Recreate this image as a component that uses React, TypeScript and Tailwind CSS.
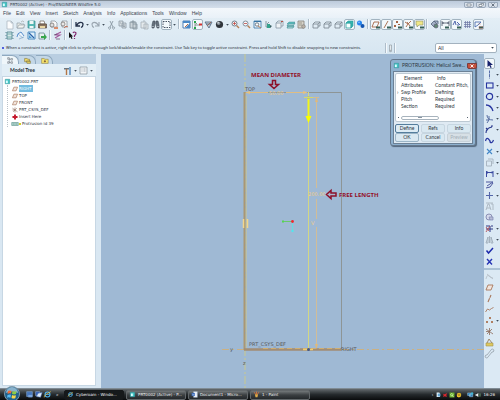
import React from 'react';
import clsx from 'clsx';

type ToolDef = {
  icon: string;
  label: string;
  pressed?: boolean;
  menu?: boolean;
};

const menus = ['File', 'Edit', 'View', 'Insert', 'Sketch', 'Analysis', 'Info', 'Applications', 'Tools', 'Window', 'Help'];

const glyphs: Record<string, React.ReactNode> = {
  page: <path d="M3 2h4l2 2v6H3zM7 2v2h2" fill="#fbfcfd" stroke="#a7b1bb" strokeWidth=".7" />,
  open: (
    <>
      <path d="M2 9V4h3l1 1h3v4z" fill="#e3e6e4" stroke="#97a2a9" strokeWidth=".7" />
      <path d="M2 9l2-3h6L8 9zM6 3q2-2 3 0" fill="#f4f5f2" stroke="#97a2a9" strokeWidth=".7" />
    </>
  ),
  save: (
    <>
      <path d="M2 2h7v7H2z" fill="#55b8b5" stroke="#398c91" strokeWidth=".7" />
      <path d="M3.500 2h4v3h-4zM3.500 7h4v2h-4z" fill="#eef6f6" />
    </>
  ),
  print: (
    <>
      <path d="M3 2h4l1 3H3z" fill="#fff" stroke="#6c6257" strokeWidth=".7" />
      <path d="M1.500 5h8v4h-8z" fill="#8b7561" stroke="#59493d" strokeWidth=".7" />
      <path d="M3 7h5v2H3z" fill="#ead7a3" />
    </>
  ),
  mail: (
    <>
      <path d="M3 2h4l2 2v4H3z" fill="#f7f7f7" stroke="#838b94" strokeWidth=".7" />
      <circle cx="4" cy="6" r="2" fill="#ddd" stroke="#706a67" strokeWidth=".7" />
      <path d="M6 8h4v2H6z" fill="#d98c6b" />
    </>
  ),
  link: (
    <>
      <path d="M3 2h5v6H3z" fill="#f7f7f7" stroke="#838b94" strokeWidth=".7" />
      <circle cx="4" cy="5" r="2" fill="#e8e8e8" stroke="#706a67" strokeWidth=".7" />
      <path d="M5 9q2-3 4-1" fill="none" stroke="#c46f55" />
    </>
  ),
  undo: <path d="M2 3v4h4M2.500 6.500C5 2 9 3 9 5.500q0 2-2 3" fill="none" stroke="#26324a" strokeWidth="1.300" />,
  redo: <path d="M9 3v4H5M8.500 6.500C6 2 2 3 2 5.500q0 2 2 3" fill="none" stroke="#9aa5af" strokeWidth="1.100" />,
  cut: <path d="M4 2l3 6M7 2L4 8M3.500 8a1 1 0 1 0 .1 0M7.500 8a1 1 0 1 0 .1 0" fill="none" stroke="#8997a3" strokeWidth=".9" />,
  copy: <path d="M2 2h4v5H2zM5 4h4v5H5zM3 4h1M6 6h2M6 7.500h2" fill="#d8dee2" stroke="#8d9aa5" strokeWidth=".8" />,
  paste: <path d="M2 3h6v6H2zM4 2h2v2H4zM5 5h4v5H5z" fill="#ccd4d9" stroke="#84929d" strokeWidth=".8" />,
  pasteAs: <path d="M2 3h5v6H2zM4 2h2M5 5h4v5H5z" fill="#e4e9ec" stroke="#a4afb8" strokeWidth=".8" />,
  find: (
    <>
      <path d="M3 2h2v3L4 9H2V6zM6 2h2l1 4v3H7L6 5zM5 4h1" fill="#65707c" stroke="#3f4b57" strokeWidth=".6" />
      <path d="M3 7v1M8 7v1" stroke="#dfe8ee" />
    </>
  ),
  marquee: <rect x="2" y="2.500" width="7" height="6" fill="none" stroke="#374252" strokeDasharray="1.500 1" strokeWidth=".9" />,
  repaint: (
    <>
      <path d="M2 2h7v7H2z" fill="#fff" stroke="#2862a7" strokeWidth=".8" />
      <path d="M2 2h7v2H2zM4 9l5-5v5z" fill="#4988c6" />
      <path d="M4 8l3-3" stroke="#b66a45" />
    </>
  ),
  spin: (
    <>
      <path d="M3 3v6M3 6h5M3 3l2 2" stroke="#62706c" strokeWidth=".7" />
      <path d="M2 2h2v2H2zM2 8h2v2H2z" fill="#26a44b" />
      <path d="M7 4.500h3v2H7z" fill="#d23230" />
    </>
  ),
  orient: (
    <>
      <path d="M2 3h7L6 9zM3 5h5" fill="#c3d0db" stroke="#5c7187" strokeWidth=".9" />
      <path d="M4 7l4-4" stroke="#956b60" />
    </>
  ),
  sphere: (
    <>
      <circle cx="5.500" cy="5.500" r="3.600" fill="#30353b" />
      <circle cx="4.600" cy="4.200" r="1.700" fill="#89929a" />
      <circle cx="4.200" cy="3.800" r=".7" fill="#e4e8ea" />
    </>
  ),
  zoomIn: (
    <>
      <path d="M6.500 6.500L9 9" stroke="#b77f55" strokeWidth="1.400" />
      <circle cx="4.500" cy="4.500" r="2.500" fill="#f4f8fb" stroke="#67717c" strokeWidth=".9" />
      <path d="M3 4.500h3M4.500 3v3" stroke="#c24944" strokeWidth=".8" />
    </>
  ),
  zoomOut: (
    <>
      <path d="M6.500 6.500L9 9" stroke="#b77f55" strokeWidth="1.400" />
      <circle cx="4.500" cy="4.500" r="2.500" fill="#f4f8fb" stroke="#7a8590" strokeWidth=".9" />
      <path d="M3 4.500h3" stroke="#c24944" strokeWidth=".8" />
    </>
  ),
  refit: (
    <>
      <path d="M2 2h7v7H2z" fill="#e6f1fa" stroke="#3775a4" strokeWidth=".8" />
      <path d="M2 2h7v1H2z" fill="#3775a4" />
      <circle cx="5" cy="5.500" r="1.700" fill="#fff" stroke="#55626f" strokeWidth=".8" />
      <path d="M6 7l3 2" stroke="#b77f55" />
    </>
  ),
  datumDisp: (
    <>
      <path d="M3 2v6h5M4 5l2-2" fill="none" stroke="#71838b" strokeWidth=".8" />
      <path d="M4 5h3v4H4z" fill="#35a28d" />
      <path d="M7 6l2 1-2 2z" fill="#365e60" />
    </>
  ),
  views: (
    <>
      <path d="M2 4h5v5H2zM4 2h5v5H7M2 4l2-2M7 4l2-2" fill="#eef2f5" stroke="#8595a2" strokeWidth=".8" />
      <path d="M7 2h2v1H7z" fill="#b45346" />
    </>
  ),
  layers: (
    <>
      <path d="M2 7l2-3h6L8 7zM2 9l1-2h6L8 9z" fill="#b5dcdf" stroke="#398d91" strokeWidth=".7" />
      <path d="M2 5l2-2h6L8 5z" fill="#5abcbc" stroke="#47939b" strokeWidth=".5" />
    </>
  ),
  manager: (
    <>
      <path d="M2 2h6v7H2z" fill="#d8d4ca" stroke="#86817a" strokeWidth=".8" />
      <path d="M3 4h3M3 6h3" stroke="#857e74" strokeWidth=".7" />
      <circle cx="7.500" cy="7.500" r="1.800" fill="#bbb1a5" stroke="#777" strokeWidth=".6" />
    </>
  ),
  wire: <path d="M2 5h5v4H2zM4 3h5v4H7M2 5l2-2M7 5l2-2" fill="none" stroke="#77838d" strokeWidth=".8" />,
  shaded: (
    <>
      <path d="M2 4h5v5H2z" fill="#f5ffff" stroke="#249c9c" strokeWidth=".8" />
      <path d="M2 4l2-2h5v5L7 9V4z" fill="#36b5af" stroke="#249c9c" strokeWidth=".6" />
    </>
  ),
  balls: (
    <>
      <circle cx="4.500" cy="4" r="2.500" fill="#2584ed" />
      <circle cx="7.500" cy="7" r="2" fill="#1354b0" />
      <circle cx="4" cy="3.400" r=".8" fill="#8ec6ff" />
    </>
  ),
  planeEye: (
    <>
      <path d="M2 8l2-5h5L7 8z" fill="none" stroke="#a46445" strokeWidth=".9" />
      <path d="M6 7.500h4v2H6z" fill="#345f56" />
    </>
  ),
  axisEye: (
    <>
      <path d="M3 9l4-7" stroke="#a46445" strokeWidth=".9" />
      <path d="M6 7.500h4v2H6z" fill="#345f56" />
    </>
  ),
  pointEye: (
    <>
      <path d="M4 2h2v2H4zM2 6h2v2H2zM6 5h2v1H6z" fill="#a46445" />
      <path d="M6 7.500h4v2H6z" fill="#345f56" />
    </>
  ),
  csysEye: (
    <>
      <path d="M2 3l3 2 3-3M5 5L3 8M4 3l3 4" fill="none" stroke="#a46445" strokeWidth=".9" />
      <path d="M6 7.500h4v2H6z" fill="#345f56" />
    </>
  ),
  noteEye: (
    <>
      <path d="M2 2h7v4H5L3 8V6H2z" fill="#f0e786" stroke="#8c8f68" strokeWidth=".6" />
      <path d="M6 7.500h4v2H6z" fill="#345f56" />
    </>
  ),
  regen: (
    <>
      <path d="M2 5l3-3 3 3-3 3zM5 2h4v3" fill="#a1afc4" stroke="#56647d" strokeWidth=".8" />
      <circle cx="7" cy="7" r="2" fill="#608a74" stroke="#5f5c74" strokeWidth=".7" />
    </>
  ),
  dimEye: (
    <>
      <path d="M2 2v5M9 2v5M2 4h7M3 3v2M8 3v2" fill="none" stroke="#454f62" strokeWidth=".8" />
      <path d="M5 7.500h4v2H5z" fill="#345f56" />
    </>
  ),
  constrEye: (
    <>
      <path d="M2 6l2-4 1 4M6 3l3 3M6 6h2" fill="none" stroke="#4157a4" strokeWidth=".9" />
      <path d="M6 7.500h4v2H6z" fill="#345f56" />
    </>
  ),
  grid: <path d="M2 3.500h7M2 5.500h7M2 7.500h7M3.500 2v7M5.500 2v7M7.500 2v7" stroke="#6c74a4" strokeWidth=".7" />,
  vertexEye: (
    <>
      <path d="M2 3h6M2 8l3-2 3-3M2 3v5" fill="none" stroke="#3c61a9" strokeWidth=".8" />
      <path d="M5 5h3M6 7.500h4v2H6z" fill="#345f56" stroke="#b15f55" strokeWidth=".4" />
    </>
  ),
  sketchSetup: (
    <>
      <path d="M3 2h5v7H3zM2 2v1M2 5v1M2 8v1M9 2v1M9 5v1M9 8v1" fill="#d7e8e7" stroke="#497e8b" strokeWidth=".8" />
      <path d="M3 4h5M3 7h5" stroke="#4e9a9d" strokeWidth=".7" />
    </>
  ),
  sketchRef: (
    <>
      <path d="M2 7q0-4 4-5l3 4" fill="#eaf3fb" stroke="#4a86c8" strokeWidth=".9" />
      <path d="M4 9l5-2M3 4l5 4" stroke="#83a6c8" strokeWidth=".7" />
    </>
  ),
  sketchView: (
    <>
      <path d="M2 2h7v7H2z" fill="#dff0fb" stroke="#2673b5" strokeWidth=".8" />
      <path d="M3 3l5 5" stroke="#2862a7" strokeWidth="1.300" />
      <path d="M3 5v3h3z" fill="#4d9ed3" />
    </>
  ),
  sketchGo: (
    <>
      <path d="M2 3h5l1 2v4H2z" fill="#e6eeee" stroke="#698794" strokeWidth=".8" />
      <path d="M4 6h3V4l3 3-3 3V8H4z" fill="#37a64b" />
    </>
  ),
  feature: (
    <>
      <path d="M9 2L3 5h5L3 8" fill="none" stroke="#a2569a" strokeWidth="1.100" />
      <path d="M2 5l3-1M4 9h4" stroke="#6a5174" strokeWidth=".8" />
    </>
  ),
  whatsThis: (
    <>
      <path d="M2 2v6l1.500-1 1 2 1-.5-1-2H6z" fill="#111" />
      <path d="M6 3q1-2 3 0 0 2-1.500 2.500V7M7.500 8v1" fill="none" stroke="#81296c" strokeWidth="1.200" />
    </>
  ),
  select: <path d="M3.500 2v7l1.800-1.600L6.500 10l1.200-.6-1.200-2.500H9z" fill="#17216c" />,
  line: <path d="M5.500 1.500v8" stroke="#4a61a0" strokeWidth=".9" strokeDasharray="3 .6" />,
  rect: <rect x="2.500" y="3" width="6.500" height="5" fill="none" stroke="#2735a0" strokeWidth="1.100" />,
  circle: <circle cx="5.500" cy="5.500" r="3.100" fill="none" stroke="#2735a0" strokeWidth="1.200" />,
  arc: <path d="M2 3q5 0 7 6" fill="none" stroke="#2735a0" strokeWidth="1.300" />,
  fillet: <path d="M3 2q0 5 6 5M2 7h3V3M5 7l-2 3" fill="none" stroke="#4b629a" strokeWidth=".9" />,
  chamfer: <path d="M2 9q0-5 6-6M7 2h2M2 4l2 2" fill="none" stroke="#2c3b8e" strokeWidth="1.100" />,
  spline: <path d="M1.500 6q1-4 3-2t1.500 3q2 2 3.500-2" fill="none" stroke="#2735a0" strokeWidth="1.200" />,
  point: <path d="M3 3l5 5M8 3L3 8" stroke="#4387c8" strokeWidth="1.100" />,
  useEdge: <path d="M2.500 4h5v5h-5zM4 2h5v5" fill="none" stroke="#a5b1bd" strokeWidth=".9" />,
  dim: <path d="M2.500 9V3M9 9V3M2.500 4.500h6.500M3.500 3.500v2M8 3.500v2" fill="none" stroke="#3b4aa1" strokeWidth="1" />,
  modify: <path d="M2 3h7L3 7M2 9l4-1 3-4" fill="none" stroke="#4b569d" strokeWidth="1" />,
  constraint: <path d="M5.500 2v7M2 5.500h7" stroke="#5466aa" strokeWidth="1.100" />,
  text: <path d="M2 9l2-6h1l2 6M3 7h3M7 3h2v6M2 2h7" fill="none" stroke="#a9b4be" strokeWidth=".9" />,
  palette: (
    <>
      <circle cx="5" cy="5" r="3" fill="#d5d9ec" stroke="#777ea6" strokeWidth=".8" />
      <path d="M5 5h4v3H6z" fill="#b7bdd8" stroke="#7f88b1" strokeWidth=".7" />
    </>
  ),
  trim: (
    <>
      <path d="M2 3h4M2 6h7M6 3v6M7 3h2" fill="none" stroke="#2f3b86" strokeWidth="1" />
      <path d="M2 9l4-6M2 4l3 4" stroke="#b35058" strokeWidth=".9" />
    </>
  ),
  mirror: <path d="M5.500 2v7M4 3L2 9h2zM7 3l2 6H7z" fill="none" stroke="#9eacb8" strokeWidth=".9" />,
  done: <path d="M2.500 5.500l2 2.500L9 3" fill="none" stroke="#1d2bab" strokeWidth="1.500" />,
  quit: <path d="M3 3l5 5.500M8 3L3 8.500" stroke="#2735b4" strokeWidth="1.400" />,
  curve: <path d="M2 8q1-5 3-3t4 2M3 3l6 5" fill="none" stroke="#b4bdc5" strokeWidth=".8" />,
  plane: <path d="M2 8l2-5h5L7 8z" fill="#f1e4dc" stroke="#a8775b" strokeWidth=".9" />,
  axis: <path d="M4 9l3-7" stroke="#a8775b" strokeWidth="1.100" strokeDasharray="4 .7" />,
  wave: <path d="M1.500 8l2-3 2 1 2-1.500 2-1" fill="none" stroke="#a8775b" strokeWidth=".9" />,
  points: <path d="M5 2h2v2H5zM2 6h2v2H2zM7 6h2v2H7z" fill="#b08063" />,
  csys: <path d="M2 3l7 5M8 3L3 8M5.500 5.500H2M5.500 2v7" stroke="#8c6a58" strokeWidth=".8" />,
  analysis: (
    <>
      <path d="M2 6h7v3H2z" fill="#dfc95e" stroke="#a3914f" strokeWidth=".6" />
      <path d="M3 6l2-4 3 4" fill="none" stroke="#967e5b" strokeWidth=".9" />
    </>
  ),
  chain: <path d="M3 7a1.500 1.500 0 1 0 1 2l4-5a1.500 1.500 0 1 0-1-2z" fill="none" stroke="#9da9b3" strokeWidth=".9" />,
  part: (
    <>
      <path d="M2 2h7v7H2z" fill="#40c5c5" stroke="#338e96" strokeWidth=".8" />
      <path d="M3 4h3v4H3z" fill="#d9ffff" />
    </>
  ),
  insert: <path d="M5.500 2v7M2 5.500h7" stroke="#c5182c" strokeWidth="2.600" />,
  coil: <path d="M1 3.500h9v4H1zM3 4v3M5.500 4v3M8 4v3" fill="#c4e4dd" stroke="#60958e" strokeWidth=".9" />,
  tree: <path d="M2 2h2v2H2zM2 7h2v2H2zM6 3h2v2H6zM6 7h2v2H6zM4 3v5M4 4h2M4 8h2" fill="#edf2f4" stroke="#6e7882" strokeWidth=".7" />,
  folders: <path d="M2 3h3l1 1h2v3H2zM4 6h5v3H5z" fill="#f2db68" stroke="#887e48" strokeWidth=".8" />,
  favorites: (
    <>
      <path d="M2 3h3l1 1h4v5H2z" fill="#f6e36d" stroke="#8c8044" strokeWidth=".7" />
      <path d="M6 5l1.500 1.500L6 8 4.500 6.500z" fill="#7a5c34" />
    </>
  ),
  settings: (
    <>
      <path d="M2 3h5v1.500H2z" fill="#6b7781" />
      <path d="M8 2v3M8 5v5" stroke="#5a8dc0" strokeWidth="1.500" />
      <path d="M4.500 4v6" stroke="#b37647" strokeWidth="1.400" />
    </>
  ),
  show: <path d="M2 2h7v7H2zM3.500 4h1M5.500 4h2M3.500 6h1M5.500 6h2" fill="#f2f5f7" stroke="#84909a" strokeWidth=".7" />,
  ie: (
    <>
      <circle cx="5.500" cy="5.500" r="3" fill="none" stroke="#4eb4f2" strokeWidth="1.400" />
      <path d="M3 5.500h5" stroke="#4eb4f2" />
      <path d="M1.500 9Q1 6 9.500 2" fill="none" stroke="#efc84a" strokeWidth=".9" />
    </>
  ),
  desktop: (
    <>
      <path d="M2 2h7v6H2z" fill="#4676bc" stroke="#8fb4df" strokeWidth=".6" />
      <path d="M4 6h5v3H4z" fill="#7aa3dc" />
    </>
  ),
  switcher: (
    <>
      <path d="M2 2h5v5H2z" fill="#315db2" stroke="#a4bfe0" strokeWidth=".6" />
      <path d="M5 4l5-1-2 6-5-1z" fill="#dce9f7" stroke="#426fb9" strokeWidth=".6" />
    </>
  ),
  word: (
    <>
      <path d="M4 1h6v9H4z" fill="#f1f5fb" stroke="#99b1d2" strokeWidth=".5" />
      <path d="M1 3h5v5H1z" fill="#3264b4" />
      <path d="M2 4l.8 3 .8-2 .8 2L5 4M7 4h2M7 6h2" fill="none" stroke="#b6ccee" strokeWidth=".6" />
    </>
  ),
  paint: (
    <>
      <path d="M3 5h5L7 10H4z" fill="#e0ac48" />
      <path d="M4 5L2 2M5.500 5V1M7 5l2-3" stroke="#e77738" strokeWidth="1.300" />
    </>
  ),
  trayDoc: (
    <>
      <path d="M3 1h5l1 2v6H3z" fill="#e5f2fa" />
      <path d="M5 3h5v5H5z" fill="#65a6d4" />
    </>
  ),
  trayAlert: <path d="M2 3l3 1 4-2-1 4 1 3-4-1-3 1 1-3z" fill="#d8272e" />,
  trayGreen: (
    <>
      <path d="M1 1h9v9H1z" fill="#6bb52d" />
      <path d="M6 6l2 3M5 3a2 2 0 1 0 .1 0" fill="none" stroke="#e9f8ce" strokeWidth="1.200" />
    </>
  ),
  traySun: (
    <>
      <path d="M5.500 1l1 1.500 2-.5v2l1.500 1.500L8.500 7v2h-2l-1 1.500L4 9l-2 .2V7L1 5.500 2.500 4V2l2 .5z" fill="#f2c327" />
      <circle cx="5.500" cy="5.500" r="1.500" fill="#755316" />
    </>
  ),
  network: (
    <>
      <path d="M1 3h5v4H1zM4 5h5v4H4z" fill="#247cbb" stroke="#b8d9ee" strokeWidth=".7" />
      <circle cx="8" cy="4" r="2" fill="#42b5d5" />
    </>
  ),
  volume: (
    <>
      <path d="M1 4h2l3-2v7L3 7H1z" fill="#f1f4f5" />
      <path d="M7 3q2 2.500 0 5M9 2q2 3.500 0 7" fill="none" stroke="#7eb886" strokeWidth=".9" />
    </>
  ),
};

function Icon({ name, className = 'size-[11px]' }: { name: string; className?: string }) {
  return (
    <svg viewBox="0 0 11 11" aria-hidden="true" className={clsx('block shrink-0', className)}>
      {glyphs[name]}
    </svg>
  );
}

function Arrow() {
  return (
    <svg viewBox="0 0 5 5" aria-hidden="true" className="block size-[5px] shrink-0">
      <path d="M1.200 2h2.600L2.500 3.800z" fill="#3f4b58" />
    </svg>
  );
}

function Divider() {
  return <span className="mx-px h-[10px] w-[2px] shrink-0 border-l border-[#aebdca] bg-[#f5f9fc]" />;
}

function Tool({ tool }: { tool: ToolDef }) {
  return (
    <button type="button" aria-label={tool.label} className="flex shrink-0 items-center">
      <span
        className={clsx(
          'rounded-[2px]',
          tool.pressed && 'bg-[#f3f8fb] outline outline-[#a2b3c0] -outline-offset-1',
        )}
      >
        <Icon name={tool.icon} />
      </span>
      {tool.menu && <Arrow />}
    </button>
  );
}

const toolGroups: ToolDef[][] = [
  [
    { icon: 'page', label: 'New' },
    { icon: 'open', label: 'Open' },
    { icon: 'save', label: 'Save' },
    { icon: 'print', label: 'Print' },
    { icon: 'mail', label: 'Send as attachment' },
    { icon: 'link', label: 'Send as link' },
  ],
  [
    { icon: 'undo', label: 'Undo', menu: true },
    { icon: 'redo', label: 'Redo', menu: true },
    { icon: 'cut', label: 'Cut' },
    { icon: 'copy', label: 'Copy' },
    { icon: 'paste', label: 'Paste' },
    { icon: 'pasteAs', label: 'Paste special' },
    { icon: 'find', label: 'Find' },
    { icon: 'marquee', label: 'Select box', menu: true, pressed: true },
  ],
  [
    { icon: 'repaint', label: 'Repaint' },
    { icon: 'spin', label: 'Spin center', pressed: true },
    { icon: 'orient', label: 'Orient mode' },
    { icon: 'sphere', label: 'Appearance', menu: true },
    { icon: 'zoomIn', label: 'Zoom in' },
    { icon: 'zoomOut', label: 'Zoom out' },
    { icon: 'refit', label: 'Refit' },
    { icon: 'datumDisp', label: 'Reorient' },
    { icon: 'views', label: 'Saved views' },
    { icon: 'layers', label: 'Layers' },
    { icon: 'manager', label: 'View manager' },
  ],
  [
    { icon: 'wire', label: 'Wireframe' },
    { icon: 'wire', label: 'Hidden line' },
    { icon: 'wire', label: 'No hidden' },
    { icon: 'shaded', label: 'Shading', pressed: true },
    { icon: 'balls', label: 'Enhanced realism' },
  ],
  [
    { icon: 'planeEye', label: 'Planes on', pressed: true },
    { icon: 'axisEye', label: 'Axes on', pressed: true },
    { icon: 'pointEye', label: 'Points on', pressed: true },
    { icon: 'csysEye', label: 'Coordinate systems on', pressed: true },
    { icon: 'noteEye', label: 'Annotations on', pressed: true },
  ],
  [
    { icon: 'regen', label: 'Regenerate' },
    { icon: 'dimEye', label: 'Dimensions on', pressed: true },
    { icon: 'constrEye', label: 'Constraints on', pressed: true },
    { icon: 'grid', label: 'Grid' },
    { icon: 'vertexEye', label: 'Vertices on', pressed: true },
  ],
];

const sketchTools: ToolDef[] = [
  { icon: 'select', label: 'Select', pressed: true },
  { icon: 'line', label: 'Line', menu: true },
  { icon: 'rect', label: 'Rectangle', menu: true },
  { icon: 'circle', label: 'Circle', menu: true },
  { icon: 'arc', label: 'Arc', menu: true },
  { icon: 'fillet', label: 'Fillet', menu: true },
  { icon: 'chamfer', label: 'Chamfer', menu: true },
  { icon: 'spline', label: 'Spline' },
  { icon: 'point', label: 'Point', menu: true },
  { icon: 'useEdge', label: 'Use edge', menu: true },
  { icon: 'dim', label: 'Dimension', menu: true },
  { icon: 'modify', label: 'Modify' },
  { icon: 'constraint', label: 'Constrain', menu: true },
  { icon: 'text', label: 'Text' },
  { icon: 'palette', label: 'Palette' },
  { icon: 'trim', label: 'Trim', menu: true },
  { icon: 'mirror', label: 'Mirror', menu: true },
  { icon: 'done', label: 'Done' },
  { icon: 'quit', label: 'Quit' },
];

const datumTools: ToolDef[] = [
  { icon: 'curve', label: 'Sketched curve' },
  { icon: 'plane', label: 'Datum plane' },
  { icon: 'axis', label: 'Datum axis' },
  { icon: 'wave', label: 'Datum curve' },
  { icon: 'points', label: 'Datum point', menu: true },
  { icon: 'csys', label: 'Coordinate system' },
  { icon: 'analysis', label: 'Analysis feature' },
  { icon: 'chain', label: 'Reference' },
];

function Header() {
  return (
    <header className="shrink-0 bg-gradient-to-b from-[#e9f2f8] to-[#d7e6f1]">
      <div className="flex h-[8px] items-center border-t border-[#818c97] bg-gradient-to-b from-[#bccadb] to-[#d5dfeb] pl-px">
        <Icon name="part" className="size-[7px]" />
        <h1 className="ml-[2px] flex-1 font-['DejaVu_Sans',sans-serif] text-[4px] leading-[6px] text-[#333e4c]">
          PRT0002 (Active) - Pro/ENGINEER Wildfire 5.0
        </h1>
        <div className="flex gap-[2px] pr-[2px]">
          {['Minimize', 'Restore', 'Close'].map((label, i) => (
            <button key={label} type="button" aria-label={label} className="rounded-b-[2px] border border-[#99a8ba] bg-[#d7dfe9]">
              <svg viewBox="0 0 8 4" className="block h-[4px] w-[8px]">
                {i === 0 && <path d="M2 1h4v2H2z" fill="#fff" stroke="#5c6876" strokeWidth=".6" />}
                {i === 1 && <path d="M2 1.500h3v2H2zM3.500.5h3v2" fill="#fff" stroke="#5c6876" strokeWidth=".6" />}
                {i === 2 && <path d="M2.500.5l3 3M5.500.5l-3 3" stroke="#5c6876" strokeWidth=".9" />}
              </svg>
            </button>
          ))}
        </div>
      </div>
      <nav className="flex h-[10px] items-center gap-[5px] bg-gradient-to-b from-[#f3f7fb] to-[#e9f1f8] pl-[3px] text-[5px] leading-[6px] text-[#37414d]">
        {menus.map((m) => (
          <button key={m} type="button">{m}</button>
        ))}
      </nav>
      <div className="flex h-[12px] items-center pl-1">
        {toolGroups.map((group, i) => (
          <React.Fragment key={i}>
            {i > 0 && <Divider />}
            {group.map((tool) => (
              <Tool key={tool.label} tool={tool} />
            ))}
          </React.Fragment>
        ))}
      </div>
      <div className="flex h-[12px] items-start pl-1">
        <Tool tool={{ icon: 'sketchSetup', label: 'Sketch setup' }} />
        <Tool tool={{ icon: 'sketchRef', label: 'References' }} />
        <Tool tool={{ icon: 'sketchView', label: 'Sketch view' }} />
        <Tool tool={{ icon: 'sketchGo', label: 'Import' }} />
        <Divider />
        <Tool tool={{ icon: 'feature', label: 'Feature requirements' }} />
        <Divider />
        <Tool tool={{ icon: 'whatsThis', label: 'Context help' }} />
      </div>
      <div className="flex h-[12px] items-center pr-[3px] pl-[2px]">
        <span className="size-[2px] rounded-full bg-[#2334d8]" />
        <p className="ml-[2px] w-[378px] shrink-0 font-['Noto_Sans',sans-serif] text-[4px] leading-[6px] whitespace-nowrap text-[#1e2833]">
          When a constraint is active, right click to cycle through lock/disable/enable the constraint. Use Tab key to
          toggle active constraint. Press and hold Shift to disable snapping to new constraints.
        </p>
        <Divider />
        <svg viewBox="0 0 5 9" aria-hidden="true" className="h-[9px] w-[5px]">
          <path d="M1.500 1h2v6h-2z" fill="#e6ebee" stroke="#929da5" strokeWidth=".7" />
          <circle cx="2.500" cy="7" r="1.300" fill="#aab4bb" />
        </svg>
        <Divider />
        <div className="relative ml-auto w-[62px]">
          <select
            aria-label="Selection filter"
            className="block h-[10px] w-full appearance-none rounded-[2px] border border-[#a3b2bf] bg-white pl-[2px] text-[5px] leading-[8px] text-[#28323d]"
          >
            <option>All</option>
          </select>
          <span className="pointer-events-none absolute top-[2px] right-[2px]">
            <Arrow />
          </span>
        </div>
      </div>
    </header>
  );
}

const treeItems = [
  { icon: 'plane', label: 'RIGHT', selected: true },
  { icon: 'plane', label: 'TOP' },
  { icon: 'plane', label: 'FRONT' },
  { icon: 'csys', label: 'PRT_CSYS_DEF' },
  { icon: 'insert', label: 'Insert Here' },
  { icon: 'coil', label: 'Protrusion id 39', pending: true },
];

function ModelTree() {
  return (
    <aside className="flex w-[101px] shrink-0 flex-col bg-[#d9e7f2] pr-[5px] pb-[2px] pl-[2px]">
      <div className="flex h-[10px] items-end bg-[#b9cee1]">
        {['tree', 'folders', 'favorites'].map((name, i) => (
          <button
            key={name}
            type="button"
            aria-label={name}
            className={clsx(
              'flex h-[9px] w-[17px] items-center justify-center rounded-tr-[7px] border-t border-r border-[#8fa9bf]',
              i === 0 ? 'bg-[#eff6fa]' : 'bg-[#c3d7e7]',
            )}
          >
            <Icon name={name} className="size-[9px]" />
          </button>
        ))}
      </div>
      <div className="flex h-[12px] shrink-0 items-center bg-[#e2eef6] pr-[2px] pl-[8px]">
        <h2 className="flex-1 font-['Lato',sans-serif] text-[5px] leading-[6px] font-bold text-[#26303b]">Model Tree</h2>
        <Tool tool={{ icon: 'settings', label: 'Settings', menu: true }} />
        <Tool tool={{ icon: 'show', label: 'Show', menu: true }} />
      </div>
      <div className="flex-1 border border-[#c7d7e4] bg-white pt-px font-['DejaVu_Sans',sans-serif] text-[4px] leading-[7px] text-[#28323c]">
        <div className="flex items-center gap-px pl-px">
          <Icon name="part" className="size-[7px]" />
          PRT0002.PRT
        </div>
        <ul className="ml-1 border-l border-dotted border-[#b9c1c8]">
          {treeItems.map((item) => (
            <li key={item.label} className="flex h-[7px] items-center pl-[3px]">
              <Icon name={item.icon} className="size-[8px]" />
              {item.pending && <span className="mr-px size-[2px] bg-[#d3cd2c]" />}
              <span className={clsx(!item.pending && 'pr-px', item.selected && 'bg-[#73bce0] text-white')}>{item.label}</span>
            </li>
          ))}
        </ul>
      </div>
    </aside>
  );
}

/** Sketcher drawing: section rectangle, sweep profile, dimensions and notes. */
function Sketch() {
  return (
    <svg
      viewBox="101 54 383 334"
      preserveAspectRatio="xMinYMin meet"
      className="block h-full w-full"
      role="img"
      aria-label="Helical sweep profile sketch"
    >
      <path d="M245 54V388" stroke="#c9c98e" strokeDasharray="8 2 2 2" />
      <path d="M222 349.500H484" stroke="#cbb183" strokeDasharray="7 3 2 3" />
      <path d="M244 92.500H341.500V349" fill="none" stroke="#8d9596" />
      <path d="M244.500 92V350" stroke="#aa9773" strokeWidth="2" />
      <path d="M246.500 96V349" stroke="#c1c19c" strokeWidth=".7" />
      <path d="M244 349.500H341" stroke="#a28d74" strokeWidth="2.500" />
      <path d="M263 348.500H340" stroke="#d0ae70" strokeDasharray="5 3" />
      <path d="M249 92.500H268M286 92.500H305" stroke="#dfbd83" />
      <path d="M245 92.500l5-1.500v3zM308 92.500l-5-1.500v3z" fill="#e7c17c" />
      <path d="M308.500 92V349" stroke="#d3d783" />
      <path d="M316.500 98V188M316.500 199V219M316.500 227V348M308 97.500H319" stroke="#d1bd98" />
      <path d="M316.500 97l-1.500 5h3zM316.500 349l-1.500-5h3z" fill="#e0b979" />
      <path d="M308.500 97V118" stroke="#f1f51c" strokeWidth="2" />
      <path d="M305.500 116h6l-3 7z" fill="#faff00" />
      <circle cx="308.500" cy="97.500" r="1.500" fill="#bbc964" />
      <path d="M304 97.500h9" stroke="#d4d86d" />
      <path d="M243.500 219v9M247.500 219v9" stroke="#f2d68d" strokeWidth="1.500" />
      <path d="M283 221.500H292" stroke="#69c969" />
      <path d="M292.500 221V231" stroke="#65dce3" />
      <path d="M282 220.500h2v2h-2z" fill="#54d551" />
      <path d="M291.500 230h2v2h-2z" fill="#4ce9ee" />
      <circle cx="292.500" cy="221.500" r="1.400" fill="#ed2930" />
      <path d="M303 349.500h10" stroke="#efcc70" strokeWidth="1.500" />
      <circle cx="308.500" cy="349.500" r="1.500" fill="#455783" />
      <g className="font-['DejaVu_Sans',sans-serif] text-[5px]" fill="#56575a">
        <text x="245" y="91">TOP</text>
        <text x="249" y="346">PRT_CSYS_DEF</text>
        <text x="341" y="351">RIGHT</text>
        <text x="230" y="351">y</text>
        <text x="243" y="365">z</text>
      </g>
      <g className="font-['DejaVu_Sans',sans-serif] text-[5px]" fill="#f2cd85">
        <text x="269" y="95">50.00</text>
        <text x="308" y="196">200.00</text>
        <text x="311" y="225">V</text>
      </g>
      <g className="font-['Open_Sans',sans-serif] text-[6px] font-bold" fill="#930f27">
        <text x="251" y="77">MEAN DIAMETER</text>
        <text x="339" y="197">FREE LENGTH</text>
      </g>
      <path d="M272.500 80.500h3v4h3l-4.500 4-4.500-4h3z" fill="#a8b5cc" stroke="#8c1029" strokeWidth="1.500" />
      <path d="M336 193v3h-5v2.500l-4.500-4 4.500-4v2.500z" fill="#a8b5cc" stroke="#8c1029" strokeWidth="1.500" />
    </svg>
  );
}

const elements = [
  ['Attributes', 'Constant Pitch,'],
  ['Swp Profile', 'Defining'],
  ['Pitch', 'Required'],
  ['Section', 'Required'],
];

function ProtrusionDialog() {
  return (
    <section
      role="dialog"
      aria-label="Protrusion"
      className="absolute top-[5px] right-[8px] w-[86px] rounded-[3px] border border-[#66788c] bg-[#8eb1cf] px-[2px] pb-px font-['Lato',sans-serif] text-[5px] leading-[7px] text-[#303943] shadow-[1px_1px_1px_#52677d]"
    >
      <div className="flex h-[11px] items-center gap-[2px]">
        <Icon name="part" className="size-[7px]" />
        <h2 className="flex-1 whitespace-nowrap">PROTRUSION: Helical Swe...</h2>
        <button type="button" aria-label="Close dialog" className="rounded-b-[2px] border border-[#7d3c3c] bg-[#c6523d]">
          <svg viewBox="0 0 8 4" className="block h-[4px] w-[8px]">
            <path d="M2.500.5l3 3M5.500.5l-3 3" stroke="#fff" strokeWidth=".9" />
          </svg>
        </button>
      </div>
      <div className="border border-[#6c8196] bg-[#dfeaf3] p-px">
        <div className="overflow-hidden rounded-[2px] border border-[#bcc9d3] bg-white">
          <table className="w-full table-fixed">
            <thead>
              <tr className="h-[8px] text-left">
                <th className="w-[39px] p-0 pl-[8px] font-normal">Element</th>
                <th className="p-0 pl-[2px] font-normal">Info</th>
              </tr>
            </thead>
            <tbody>
              {elements.map(([name, info]) => (
                <tr key={name} className="h-[7px] whitespace-nowrap">
                  <td className="p-0">
                    <span className="inline-block w-[5px] pl-px">{name === 'Swp Profile' ? '›' : ''}</span>
                    {name}
                  </td>
                  <td className="p-0">{info}</td>
                </tr>
              ))}
            </tbody>
          </table>
          <div className="mt-[5px] mb-px flex h-[5px] items-center justify-between px-[2px]">
            <span className="size-[1px] bg-[#596673]" />
            <span className="mr-auto ml-[2px] flex h-[4px] w-[38px] items-center justify-center rounded-[2px] border border-[#a7b3bd]">
              <span className="h-px w-1 bg-[#8794a0]" />
            </span>
            <span className="size-[1px] bg-[#596673]" />
          </div>
        </div>
        <div className="mt-[2px] grid grid-cols-3 gap-x-[2px] text-center">
          {['Define', 'Refs', 'Info', 'OK', 'Cancel', 'Preview'].map((label) => (
            <button
              key={label}
              type="button"
              disabled={label === 'Preview'}
              className={clsx(
                'h-[9px] rounded-[2px] border leading-[7px]',
                label === 'Define' && 'border-[#547d9c] bg-[#dcebf4]',
                label === 'OK' && 'border-[#9bb5c7] bg-[#d9e8f1]',
                label === 'Preview' && 'border-[#c7d1d9] bg-[#d7e0e6] text-[#a4b0b9]',
                ['Refs', 'Info', 'Cancel'].includes(label) && 'border-[#c7d6e1] bg-[#d9e8f1]',
              )}
            >
              {label}
            </button>
          ))}
        </div>
      </div>
    </section>
  );
}

const tasks = [
  { icon: 'ie', label: 'Cyberoam - Windo...' },
  { icon: 'part', label: 'PRT0002 (Active) - P...' },
  { icon: 'word', label: 'Document1 - Micro...' },
  { icon: 'paint', label: '1 - Paint' },
];

function Taskbar() {
  return (
    <footer className="flex h-[12px] shrink-0 items-center border-t border-[#7f8b94] bg-gradient-to-b from-[#646a6e] via-[#252a2d] to-[#0a0c0d] pr-[5px] font-['DejaVu_Sans',sans-serif] text-[4px] leading-[7px] text-[#f0f3f5]">
      <div className="relative h-[11px] w-[25px]">
        <button type="button" aria-label="Start" className="absolute -top-[3px] left-1">
          <svg viewBox="0 0 16 16" className="block size-[16px]">
            <circle cx="8" cy="8" r="7.500" fill="#1d618d" stroke="#8299a8" />
            <path d="M2 7a6 6 0 0 1 12 0Q8 4 2 7" fill="#88b2cc" />
            <path d="M4 5q2-1 3.500 0L7 7.500Q5 7 3.500 8z" fill="#ee6e39" />
            <path d="M8.500 5q2 1 4 0L12 8q-2 1-4-.3z" fill="#8dcc43" />
            <path d="M3.500 9q2-1 3.500-.3l-.5 3q-2-1-3.500 0z" fill="#5abbf2" />
            <path d="M8 9q2 1 4 .2l-.7 3q-2 .7-3.800-.3z" fill="#fbd848" />
          </svg>
        </button>
      </div>
      <div className="flex w-[39px] items-center">
        <Icon name="desktop" className="size-[9px]" />
        <Icon name="switcher" className="size-[9px]" />
        <Icon name="ie" className="size-[9px]" />
        <span className="ml-1">»</span>
      </div>
      <div className="flex flex-1 gap-[2px]">
        {tasks.map((task, i) => (
          <button
            key={task.label}
            type="button"
            className={clsx(
              'flex h-[10px] w-[60px] items-center gap-[2px] rounded-[2px] border pl-[2px] whitespace-nowrap',
              i === 0
                ? 'border-[#15181a] bg-[#16191b]'
                : 'border-[#62676a] bg-gradient-to-b from-[#74797b] via-[#3b3f42] to-[#25292c]',
            )}
          >
            <Icon name={task.icon} className="size-[7px]" />
            {task.label}
          </button>
        ))}
      </div>
      <div className="flex items-center gap-px">
        <span className="mr-px">‹</span>
        <Icon name="trayDoc" className="size-[6px]" />
        <Icon name="trayAlert" className="size-[6px]" />
        <Icon name="trayGreen" className="size-[6px]" />
        <Icon name="traySun" className="size-[6px]" />
        <span className="w-[3px]" />
        <Icon name="network" className="size-[7px]" />
        <Icon name="volume" className="size-[6px]" />
        <time className="ml-px">16:26</time>
      </div>
    </footer>
  );
}

export default function App() {
  return (
    <div className="flex h-screen flex-col overflow-hidden bg-[#9fb9d4] font-['Liberation_Sans',sans-serif]">
      <Header />
      <div className="flex min-h-0 flex-1">
        <ModelTree />
        <main className="relative min-w-0 flex-1 bg-[#9fb9d4]">
          <Sketch />
          <ProtrusionDialog />
        </main>
        <aside aria-label="Sketcher tools" className="flex w-4 shrink-0 flex-col bg-[#dbe9f4] pt-1">
          {sketchTools.map((tool) => (
            <Tool key={tool.label} tool={tool} />
          ))}
          <hr className="my-px h-[2px] border-0 bg-[#abc2d5]" />
          {datumTools.map((tool) => (
            <Tool key={tool.label} tool={tool} />
          ))}
        </aside>
      </div>
      <Taskbar />
    </div>
  );
}
